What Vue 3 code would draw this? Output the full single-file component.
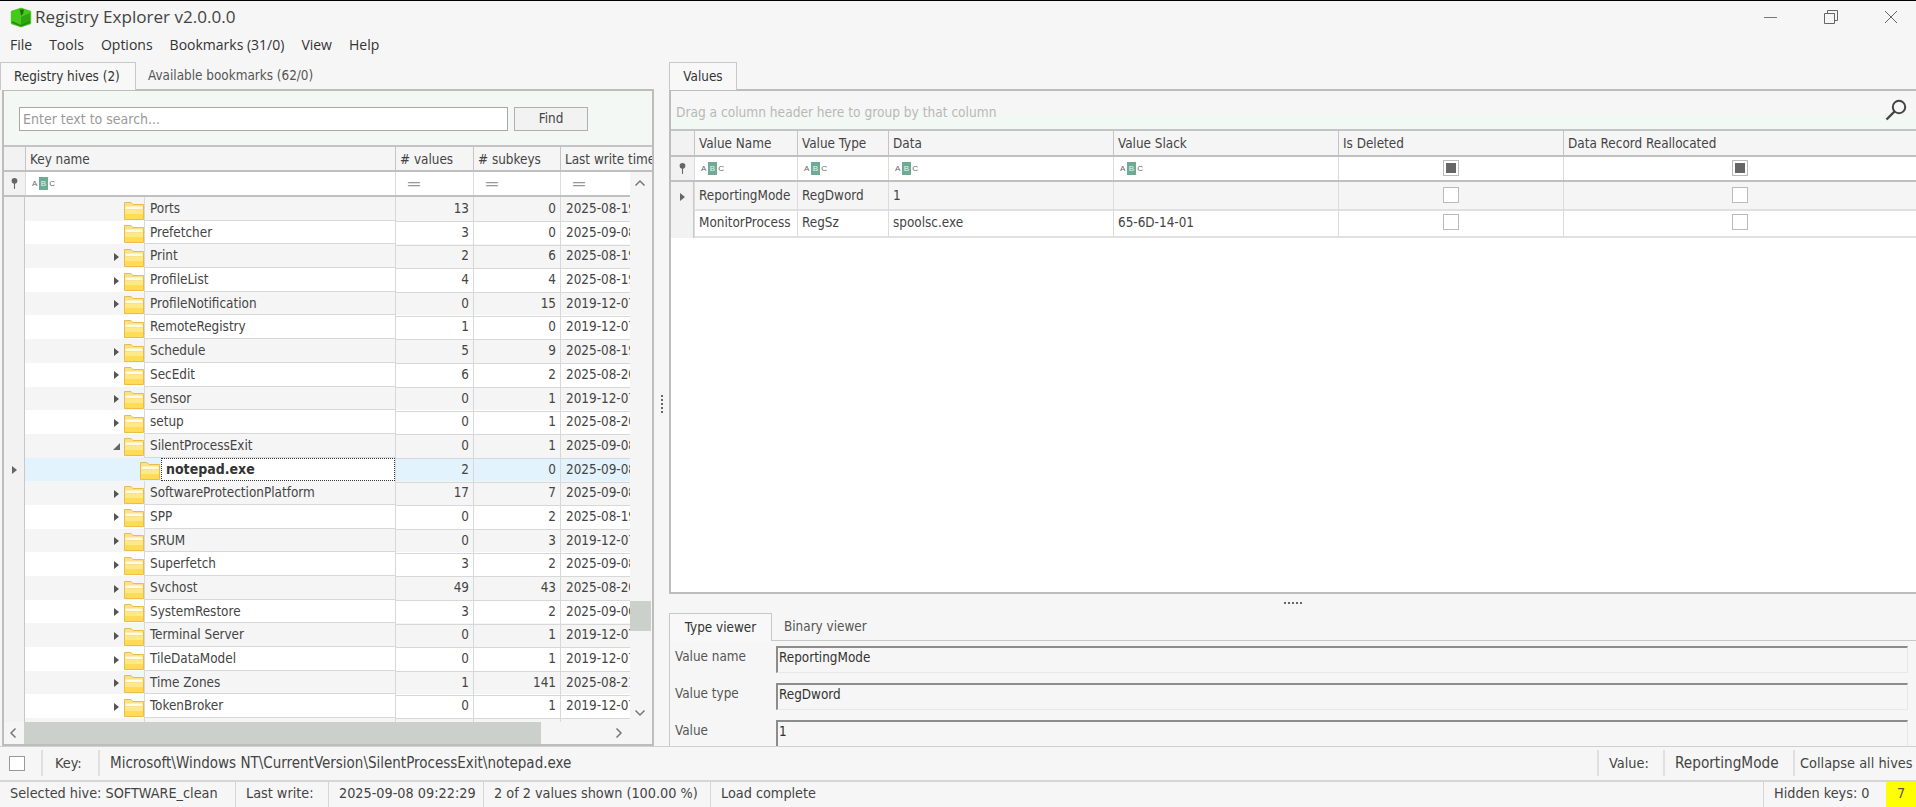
<script setup>
const leftRows = [
  { n: 'Ports', v: 13, s: 0, d: '2025-08-19 11:42:10', a: '' },
  { n: 'Prefetcher', v: 3, s: 0, d: '2025-09-08 09:10:02', a: '' },
  { n: 'Print', v: 2, s: 6, d: '2025-08-19 11:42:10', a: 'r' },
  { n: 'ProfileList', v: 4, s: 4, d: '2025-08-19 11:42:10', a: 'r' },
  { n: 'ProfileNotification', v: 0, s: 15, d: '2019-12-07 09:14:52', a: 'r' },
  { n: 'RemoteRegistry', v: 1, s: 0, d: '2019-12-07 09:14:52', a: '' },
  { n: 'Schedule', v: 5, s: 9, d: '2025-08-19 11:42:10', a: 'r' },
  { n: 'SecEdit', v: 6, s: 2, d: '2025-08-20 08:31:44', a: 'r' },
  { n: 'Sensor', v: 0, s: 1, d: '2019-12-07 09:14:52', a: 'r' },
  { n: 'setup', v: 0, s: 1, d: '2025-08-20 08:31:44', a: 'r' },
  { n: 'SilentProcessExit', v: 0, s: 1, d: '2025-09-08 09:22:29', a: 'd' },
  { n: 'notepad.exe', v: 2, s: 0, d: '2025-09-08 09:22:29', a: '', sel: true },
  { n: 'SoftwareProtectionPlatform', v: 17, s: 7, d: '2025-09-08 09:10:02', a: 'r' },
  { n: 'SPP', v: 0, s: 2, d: '2025-08-19 11:42:10', a: 'r' },
  { n: 'SRUM', v: 0, s: 3, d: '2019-12-07 09:14:52', a: 'r' },
  { n: 'Superfetch', v: 3, s: 2, d: '2025-09-08 09:10:02', a: 'r' },
  { n: 'Svchost', v: 49, s: 43, d: '2025-08-20 08:31:44', a: 'r' },
  { n: 'SystemRestore', v: 3, s: 2, d: '2025-09-06 10:05:18', a: 'r' },
  { n: 'Terminal Server', v: 0, s: 1, d: '2019-12-07 09:14:52', a: 'r' },
  { n: 'TileDataModel', v: 0, s: 1, d: '2019-12-07 09:14:52', a: 'r' },
  { n: 'Time Zones', v: 1, s: 141, d: '2025-08-21 07:50:33', a: 'r' },
  { n: 'TokenBroker', v: 0, s: 1, d: '2019-12-07 09:14:52', a: 'r' },
  { n: '', v: '', s: '', d: '', a: '' },
]
const menus = ['File', 'Tools', 'Options', 'Bookmarks (31/0)', 'View', 'Help']
const fields = [
  { l: 'Value name', v: 'ReportingMode' },
  { l: 'Value type', v: 'RegDword' },
  { l: 'Value', v: '1' },
]
const valueRows = [
  { n: 'ReportingMode', t: 'RegDword', d: '1', s: '', mark: true },
  { n: 'MonitorProcess', t: 'RegSz', d: 'spoolsc.exe', s: '65-6D-14-01', mark: false },
]
</script>

<template>
  <div class="app">
    <header class="title">
      <svg class="logo" viewBox="0 0 22 22" width="22" height="22">
        <path d="M2 6 L11 3 L20 6 L20 17 L11 20 L2 17 Z" fill="#48c81c" stroke="#48c81c" stroke-width="2.4" stroke-linejoin="round" />
        <path d="M11 11 L20 7 L20 17 L11 20 Z" fill="#2fa512" />
        <path d="M2 15 L11 19 L20 15 L20 17 L11 20.5 L2 17 Z" fill="#238c0c" />
        <path d="M9.5 3.5 L14 3.5 L13 8 L11 9.5 L10.5 6.5 Z" fill="#1c6e10" />
      </svg>
      <span class="title-text">Registry Explorer v2.0.0.0</span>
      <div class="win">
        <svg viewBox="0 0 14 14" width="14" height="14"><path d="M0 7.5H13" stroke="#777" fill="none" /></svg>
        <svg viewBox="0 0 14 14" width="14" height="14"><path d="M0.5 3.5H10.5V13.5H0.5Z M3.5 3.5V0.5H13.5V10.5H10.5" stroke="#666" fill="none" /></svg>
        <svg viewBox="0 0 14 14" width="14" height="14"><path d="M1 1L13 13M13 1L1 13" stroke="#666" fill="none" /></svg>
      </div>
    </header>
    <nav class="menu"><span v-for="m in menus" :key="m">{{ m }}</span></nav>

    <main class="main">
      <section class="left">
        <div class="tabs">
          <div class="tab on ltab">Registry hives (2)</div>
          <div class="tab ltab2">Available bookmarks (62/0)</div>
        </div>
        <div class="lpanel">
          <div class="search">
            <div class="sbox">Enter text to search...</div>
            <div class="find">Find</div>
          </div>
          <div class="lgrid lhead">
            <div class="ind"></div>
            <div class="hc">Key name</div>
            <div class="hc">&#35; values</div>
            <div class="hc">&#35; subkeys</div>
            <div class="hc last">Last write time</div>
          </div>
          <div class="lbody">
            <div class="rows">
              <div class="lgrid lfilter">
                <div class="ind pincell">
                  <svg viewBox="0 0 10 14" width="9" height="13"><circle cx="5" cy="4" r="3.2" fill="#666" /><path d="M5 6V13" stroke="#666" stroke-width="1.2" /></svg>
                </div>
                <div class="fc"><span class="abc">A<b>B</b>C</span></div>
                <div class="fc eq"><span>=</span></div>
                <div class="fc eq"><span>=</span></div>
                <div class="fc eq"><span>=</span></div>
              </div>
              <div v-for="(r, i) in leftRows" :key="i" class="lgrid lrow" :class="{ alt: i % 2 === 0, sel: r.sel }">
                <div class="ind rowind">
                  <span v-if="r.sel" class="tri-r dark"></span>
                </div>
                <div class="keycell">
                  <div class="indent" :class="{ deep: r.sel }">
                    <span v-if="r.a === 'r'" class="tri-r"></span>
                    <span v-if="r.a === 'd'" class="tri-d"></span>
                    <svg v-if="r.n" class="folder" viewBox="0 0 20 20" width="20" height="20">
                      <path d="M0.5 2.5H7L9 4.5H19.5V19.5H0.5Z" fill="#fbe28a" stroke="#e9bd4a" />
                      <path d="M1.5 6.5H18.5V9H1.5Z" fill="#fffbe6" />
                      <path d="M1 10H19V14H1Z" fill="#fee98a" />
                      <path d="M1 14H19V19H1Z" fill="#fedc55" />
                    </svg>
                  </div>
                  <div class="keyname" :class="{ focus: r.sel }">{{ r.n }}</div>
                </div>
                <div class="num">{{ r.v }}</div>
                <div class="num">{{ r.s }}</div>
                <div class="date">{{ r.d }}</div>
              </div>
            </div>
            <div class="vbar">
              <svg class="chev" viewBox="0 0 12 8" width="12" height="8"><path d="M1.5 6.5L6 2L10.5 6.5" stroke="#777" stroke-width="1.5" fill="none" /></svg>
              <div class="vthumb"></div>
              <svg class="chev down" viewBox="0 0 12 8" width="12" height="8"><path d="M1.5 1.5L6 6L10.5 1.5" stroke="#777" stroke-width="1.5" fill="none" /></svg>
            </div>
          </div>
          <div class="hbar">
            <svg class="chevh" viewBox="0 0 8 12" width="8" height="12"><path d="M6.5 1.5L2 6L6.5 10.5" stroke="#777" stroke-width="1.5" fill="none" /></svg>
            <div class="hthumb"></div>
            <svg class="chevh right" viewBox="0 0 8 12" width="8" height="12"><path d="M1.5 1.5L6 6L1.5 10.5" stroke="#777" stroke-width="1.5" fill="none" /></svg>
          </div>
        </div>
      </section>

      <div class="splitter"><i></i><i></i><i></i><i></i><i></i></div>

      <section class="right">
        <div class="tabs rtabs">
          <div class="tab on vtab">Values</div>
        </div>
        <div class="rpanel">
          <div class="group">
            <span>Drag a column header here to group by that column</span>
            <svg class="loupe" viewBox="0 0 24 24" width="24" height="24">
              <circle cx="15" cy="9" r="6.2" fill="none" stroke="#444" stroke-width="2" />
              <path d="M10.5 13.5L2.5 21.5" stroke="#444" stroke-width="2.4" />
            </svg>
          </div>
          <div class="vgrid vhead">
            <div class="ind"></div>
            <div class="hc">Value Name</div>
            <div class="hc">Value Type</div>
            <div class="hc">Data</div>
            <div class="hc">Value Slack</div>
            <div class="hc">Is Deleted</div>
            <div class="hc last">Data Record Reallocated</div>
          </div>
          <div class="vgrid vfilter">
            <div class="ind pincell">
              <svg viewBox="0 0 10 14" width="9" height="13"><circle cx="5" cy="4" r="3.2" fill="#666" /><path d="M5 6V13" stroke="#666" stroke-width="1.2" /></svg>
            </div>
            <div class="fc"><span class="abc">A<b>B</b>C</span></div>
            <div class="fc"><span class="abc">A<b>B</b>C</span></div>
            <div class="fc"><span class="abc">A<b>B</b>C</span></div>
            <div class="fc"><span class="abc">A<b>B</b>C</span></div>
            <div class="fc cc"><span class="chk filled"></span></div>
            <div class="fc cc"><span class="chk filled"></span></div>
          </div>
          <div v-for="(r, i) in valueRows" :key="r.n" class="vgrid vrow" :class="{ alt: i === 0 }">
            <div class="ind rowind"><span v-if="r.mark" class="tri-r dark"></span></div>
            <div class="vc">{{ r.n }}</div>
            <div class="vc">{{ r.t }}</div>
            <div class="vc">{{ r.d }}</div>
            <div class="vc">{{ r.s }}</div>
            <div class="vc cc"><span class="chk"></span></div>
            <div class="vc cc"><span class="chk"></span></div>
          </div>
        </div>
        <div class="hsplit"><i></i><i></i><i></i><i></i><i></i></div>
        <div class="tabs btabs">
          <div class="tab on btab">Type viewer</div>
          <div class="tab btab2">Binary viewer</div>
        </div>
        <div class="viewer">
          <div v-for="f in fields" :key="f.l" class="frow">
            <label>{{ f.l }}</label>
            <div class="fbox">{{ f.v }}</div>
          </div>
        </div>
      </section>
    </main>

    <div class="bar1">
      <span class="cb"></span>
      <span class="b1 keyl">Key:</span>
      <span class="b1 path">Microsoft\Windows NT\CurrentVersion\SilentProcessExit\notepad.exe</span>
      <span class="b1 vall">Value:</span>
      <span class="b1 valn">ReportingMode</span>
      <span class="b1 coll">Collapse all hives</span>
    </div>
    <footer class="bar2">
      <span class="s hive">Selected hive: SOFTWARE_clean</span>
      <span class="s lw">Last write:</span>
      <span class="s dt">2025-09-08 09:22:29</span>
      <span class="s shown">2 of 2 values shown (100.00 %)</span>
      <span class="s load">Load complete</span>
      <span class="s hidden">Hidden keys: 0</span>
      <span class="seven">7</span>
    </footer>
  </div>
</template>

<style>
html, body { margin: 0; background: #f6f6f6; overflow: hidden; }
</style>

<style scoped>
.app {
  width: 1916px; height: 807px; background: #f6f6f6; color: #444;
  font-family: "DejaVu Sans Condensed", "Noto Sans", sans-serif; font-size: 13.4px;
  display: flex; flex-direction: column; overflow: hidden; box-sizing: border-box;
  border-top: 1px solid #000;
}
.title { height: 31px; flex: none; display: flex; align-items: center; padding-left: 10px; }
.logo { flex: none; }
.title-text { margin-left: 3px; font-family: "Open Sans", sans-serif; font-size: 17.1px; color: #444; }
.win { margin-left: auto; display: flex; gap: 46px; padding-right: 18px; align-items: center; }
.menu { height: 30px; flex: none; display: flex; gap: 17px; align-items: center; padding-left: 10px; font-family: "Open Sans", sans-serif; font-size: 14px; color: #333; box-sizing: border-box; padding-bottom: 6px; }
.main { height: 684px; flex: none; display: flex; }
.left { width: 654px; flex: none; display: flex; flex-direction: column; }
.tabs { display: flex; height: 28px; flex: none; box-sizing: border-box; }
.tab { box-sizing: border-box; height: 28px; line-height: 28px; color: #555; }
.tab.on { background: #f8f8f8; border: 1px solid #c8c8c8; border-bottom: none; color: #333; position: relative; z-index: 1; }
.ltab { width: 136px; padding-left: 13px; }
.ltab2 { padding-left: 12px; }
.lpanel { margin-left: 2px; width: 652px; height: 657px; box-sizing: border-box; border: 2px solid #bdbdbd; margin-top: -1px; background: #fff; display: flex; flex-direction: column; }
.search { height: 56px; flex: none; background: #f3f8f4; box-sizing: border-box; padding: 16px 0 0 15px; display: flex; gap: 6px; border-bottom: 2px solid #c4c4c4; }
.sbox { width: 489px; height: 24px; box-sizing: border-box; background: #fff; border: 1px solid #a8a8a8; line-height: 22px; padding-left: 3px; color: #9a9a9a; font-size: 14px; }
.find { width: 74px; height: 24px; box-sizing: border-box; background: #f2f2f2; border: 1px solid #b0b0b0; text-align: center; line-height: 22px; color: #444; }
.lgrid { display: grid; grid-template-columns: 21px 370px 78px 87px 1fr; }
.lhead { height: 25px; flex: none; background: #f5f5f5; border-bottom: 2px solid #c0c0c0; box-sizing: border-box; }
.hc { border-left: 1px solid #c4c4c4; padding-left: 4px; line-height: 25px; white-space: nowrap; overflow: hidden; color: #444; }
.ind { background: #f2f2f2; }
.lfilter { height: 25px; background: #fff; border-bottom: 2px solid #c0c0c0; box-sizing: border-box; }
.fc { border-left: 1px solid #dcdcdc; display: flex; align-items: center; padding-left: 6px; background: #fff; min-width: 0; }
.eq { color: #999; font-size: 14px; padding-left: 10px; }
.eq span { display: inline-block; transform: scaleX(1.5); transform-origin: left center; }
.pincell { display: flex; align-items: center; justify-content: center; }
.abc { display: inline-flex; align-items: center; font-family: "Liberation Sans", sans-serif; font-size: 8px; color: #666; }
.abc b { display: inline-block; width: 9px; height: 13px; line-height: 13px; text-align: center; background: #6fab94; color: #e8f4ef; margin: 0 1.5px; font-weight: 400; }
.lbody { height: 551px; flex: none; display: flex; overflow: hidden; }
.rows { width: 626px; flex: none; overflow: hidden; }
.lrow { height: 23.7px; background: #fff; }
.lrow.alt { background: #f5f5f5; }
.lrow.sel { background: #e3f3fd; }
.rowind { border-right: 1px solid #c8c8c8; background: #f2f2f2; display: flex; align-items: center; justify-content: center; box-sizing: border-box; }
.keycell { display: flex; min-width: 0; }
.indent { width: 119px; flex: none; display: flex; align-items: center; justify-content: flex-end; }
.indent.deep { width: 135px; }
.folder { flex: none; }
.tri-r { width: 0; height: 0; border-left: 5px solid #555; border-top: 4px solid transparent; border-bottom: 4px solid transparent; display: inline-block; }
.indent .tri-r { margin-right: 5px; }
.tri-r.dark { border-left-color: #666; }
.tri-d { width: 0; height: 0; border-right: 7px solid #666; border-top: 7px solid transparent; margin-right: 4px; display: inline-block; }
.keyname { flex: 1; min-width: 0; line-height: 24px; height: 23.7px; box-sizing: border-box; padding-left: 5px; border-left: 1px solid #d8d8d8; border-bottom: 1px solid #d8d8d8; color: #444; white-space: nowrap; }
.keyname.focus { background: #fff; border: 1px dotted #333; font-weight: 700; font-size: 14px; line-height: 21px; color: #333; margin-left: 1px; padding-left: 4px; }
.num { border-left: 1px solid #d8d8d8; border-bottom: 1px solid #d8d8d8; text-align: right; padding-right: 4px; line-height: 24px; box-sizing: border-box; color: #444; }
.date { border-left: 1px solid #d8d8d8; border-bottom: 1px solid #d8d8d8; padding-left: 5px; line-height: 24px; white-space: nowrap; overflow: hidden; box-sizing: border-box; color: #444; }
.vbar { width: 22px; flex: none; background: #f5f5f5; position: relative; }
.chev { position: absolute; left: 4px; top: 7px; }
.chev.down { top: auto; bottom: 6px; }
.vthumb { position: absolute; left: 0; top: 429px; width: 21px; height: 30px; background: #ccd0cc; }
.hbar { height: 22px; flex: none; position: relative; background: #f5f5f5; margin-top: -1px; }
.hthumb { position: absolute; left: 20px; width: 517px; top: 0; height: 22px; background: #ccd0cc; }
.chevh { position: absolute; left: 5px; top: 5px; }
.chevh.right { left: 611px; }
.splitter { width: 15px; flex: none; display: flex; flex-direction: column; gap: 2px; align-items: center; justify-content: center; box-sizing: border-box; }
.splitter i, .hsplit i { display: block; width: 2px; height: 2px; background: #666; }
.right { flex: 1; min-width: 0; display: flex; flex-direction: column; }
.vtab { width: 68px; text-align: center; }
.rpanel { height: 505px; flex: none; box-sizing: border-box; border: 2px solid #bdbdbd; border-right: none; margin-top: -1px; background: #fff; }
.group { height: 40px; box-sizing: border-box; background: linear-gradient(#f6f6f6 0 60%, #f2f8f3 60%); color: #b8b8b8; display: flex; align-items: center; justify-content: space-between; padding: 3px 6px 0 5px; border-bottom: 2px solid #c4c4c4; }
.group span { font-size: 13.6px; }
.loupe { flex: none; margin-right: 2px; margin-bottom: 3px; }
.vgrid { display: grid; grid-template-columns: 23px 103px 91px 225px 225px 225px 353px; }
.vhead { height: 26px; background: #f5f5f5; border-bottom: 2px solid #c0c0c0; box-sizing: border-box; }
.vfilter { height: 25px; background: #fff; border-bottom: 2px solid #c0c0c0; box-sizing: border-box; }
.chk { width: 16px; height: 16px; box-sizing: border-box; border: 1px solid #bbb; background: #fff; display: block; }
.chk.filled { border: 3px solid #fff; outline: 1px solid #bbb; outline-offset: -1px; background: #666; }
.vrow { height: 26.5px; background: #fff; }
.vrow.alt { background: #f5f5f5; }
.vc { border-left: 1px solid #dcdcdc; border-bottom: 2px solid #e0e0e0; padding-left: 4px; line-height: 27px; box-sizing: border-box; white-space: nowrap; color: #444; }
.fc.cc, .vc.cc { justify-content: center; display: flex; align-items: center; padding-left: 0; padding-bottom: 1px; box-sizing: border-box; }
.hsplit { height: 19px; flex: none; display: flex; gap: 2px; align-items: center; justify-content: center; padding-bottom: 2px; box-sizing: border-box; }
.btab { width: 103px; text-align: center; }
.btab2 { padding-left: 12px; }
.viewer { height: 107px; flex: none; border: 1px solid #c8c8c8; border-right: none; box-sizing: border-box; margin-top: -1px; padding-top: 5px; display: flex; flex-direction: column; gap: 10px; }
.frow { display: flex; height: 27px; flex: none; }
.frow label { width: 106px; padding-left: 5px; line-height: 21px; box-sizing: border-box; color: #555; }
.fbox { width: 1132px; height: 27px; box-sizing: border-box; border-top: 2px solid #8c8c8c; border-left: 2px solid #8c8c8c; border-right: 1px solid #e8e8e8; border-bottom: 1px solid #e8e8e8; padding-left: 1px; line-height: 19px; color: #333; }
.bar1 { height: 34px; flex: none; box-sizing: border-box; border-top: 1px solid #d0d0d0; background: #f6f6f6; display: flex; align-items: center; position: relative; padding-bottom: 1px; }
.cb { width: 16px; height: 15px; box-sizing: border-box; border: 1px solid #999; background: #fff; margin-left: 9px; flex: none; }
.b1 { height: 26px; line-height: 26px; border-left: 2px solid #e0e0e0; box-sizing: border-box; white-space: nowrap; color: #444; font-size: 14.4px; }
.keyl { margin-left: 16px; padding-left: 12px; width: 57px; }
.path { padding-left: 10px; flex: 1; font-size: 15px; }
.vall { width: 66px; padding-left: 10px; }
.valn { width: 130px; padding-left: 10px; font-size: 15.2px; }
.coll { width: 123px; padding-left: 5px; }
.bar2 { height: 27px; flex: none; box-sizing: border-box; border-top: 2px solid #d6d6d6; display: flex; align-items: stretch; font-size: 14.3px; }
.s { line-height: 23px; border-right: 1px solid #d6d6d6; box-sizing: border-box; white-space: nowrap; padding-left: 10px; color: #444; }
.hive { width: 236px; }
.lw { width: 93px; }
.dt { width: 155px; }
.shown { width: 227px; }
.load { flex: 1; }
.hidden { width: 122px; border-right: none; }
.seven { width: 30px; background: #ffff00; text-align: center; line-height: 23px; color: #555; }
</style>
